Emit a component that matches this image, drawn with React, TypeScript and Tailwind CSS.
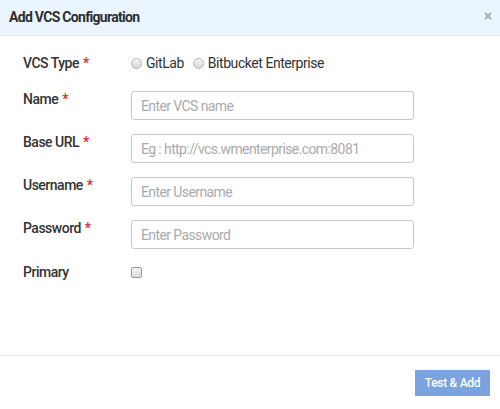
import React from 'react';

const Label: React.FC<{ text: string; required?: boolean }> = ({ text, required }) => (
  <div className="w-[108px] shrink-0 text-[14px] leading-[20px] font-medium tracking-[-0.5px] text-[#333]">
    {text}
    {required && <span className="ml-[4px] text-[#e0262c]">*</span>}
  </div>
);

const Radio: React.FC = () => (
  <span className="inline-block w-[11px] h-[11px] rounded-full border border-[#b5b5b5] bg-gradient-to-b from-[#f4f4f4] to-[#d8d8d8]" />
);

const TextRow: React.FC<{ label: string; placeholder: string; type?: string }> = ({ label, placeholder, type = 'text' }) => (
  <div className="flex items-start">
    <Label text={label} required />
    <input
      type={type}
      placeholder={placeholder}
      className="mt-[2px] w-[283px] h-[29px] rounded-[3px] border border-[#c8c8c8] bg-white px-[9px] text-[14px] tracking-[-0.6px] text-[#333] placeholder:text-[#aaa] outline-none"
    />
  </div>
);

export default function App() {
  return (
    <div className="w-[500px] h-[409px] bg-white flex flex-col font-['Roboto',sans-serif]">
      <div className="h-[36px] shrink-0 flex items-center justify-between bg-[#ebf5fe] border-b border-[#e3e3e3] pl-[9px] pr-[8px]">
        <span className="text-[14px] font-bold text-[#2e2e2e] tracking-[-0.7px]">Add VCS Configuration</span>
        <svg width="8" height="8" viewBox="0 0 8 8" className="mt-[-3px]">
          <path d="M1 1L7 7M7 1L1 7" stroke="#a9b0b6" strokeWidth="2.2" />
        </svg>
      </div>

      <div className="flex-1 flex flex-col pl-[23px] pt-[17px]">
        <div className="flex items-center h-[20px]">
          <Label text="VCS Type" required />
          <div className="flex items-center text-[14px] tracking-[-0.45px] text-[#333]">
            <Radio />
            <span className="ml-[4px]">GitLab</span>
            <span className="ml-[9px] flex items-center"><Radio /></span>
            <span className="ml-[4px]">Bitbucket Enterprise</span>
          </div>
        </div>

        <div className="mt-[16px] flex flex-col gap-[12px]">
          <TextRow label="Name" placeholder="Enter VCS name" />
          <TextRow label="Base URL" placeholder="Eg : http://vcs.wmenterprise.com:8081" />
          <TextRow label="Username" placeholder="Enter Username" />
          <TextRow label="Password" placeholder="Enter Password" type="password" />
        </div>

        <div className="mt-[13px] flex items-center h-[20px]">
          <Label text="Primary" />
          <span className="inline-block w-[11px] h-[11px] rounded-[2px] border border-[#999] bg-gradient-to-b from-[#f6f6f6] to-[#dcdcdc]" />
        </div>
      </div>

      <div className="h-[54px] shrink-0 border-t border-[#e3e3e3] flex items-center justify-end pr-[10px]">
        <button className="w-[75px] h-[26px] bg-[#7aa3e0] text-white text-[12px] tracking-[-0.3px] font-medium">
          Test &amp; Add
        </button>
      </div>
    </div>
  );
}
